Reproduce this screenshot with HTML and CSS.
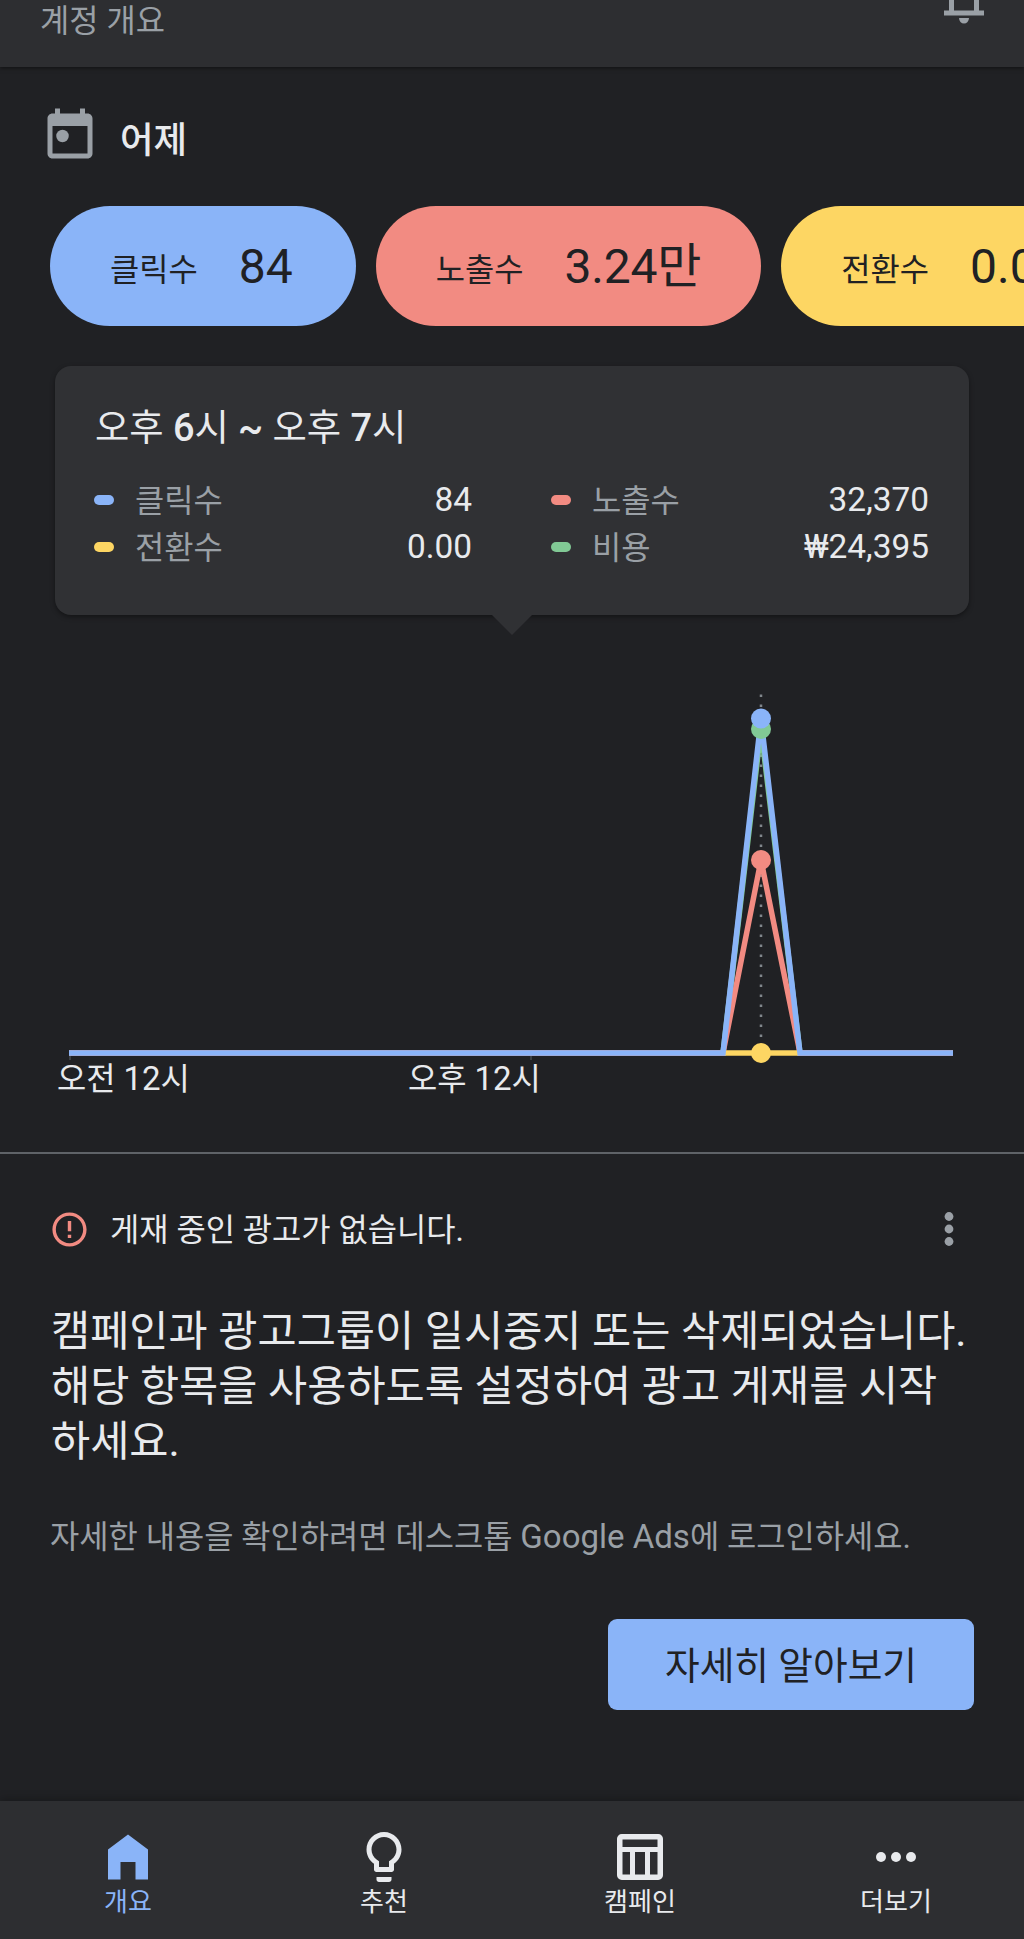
FILE: index.html
```html
<!DOCTYPE html>
<html lang="ko">
<head>
  <meta charset="UTF-8">
  <meta name="viewport" content="width=device-width, initial-scale=1.0">
  <title>계정 개요</title>
  <link rel="stylesheet" href="styles.css">
</head>
<body>
  <header class="topbar">
    <span class="topbar-title">계정 개요</span>
    <svg class="icon bell" viewBox="0 0 24 24">
      <path fill-rule="evenodd" d="M4 19v-2h2v-7c0-2.77 1.8-5 4.5-5.7V4a1.5 1.5 0 0 1 3 0v.3C16.2 5 18 7.23 18 10v7h2v2H4zM8 17h8v-7c0-2.2-1.8-4-4-4s-4 1.8-4 4v7z"/>
      <path d="M10 20h4a2 2.2 0 0 1-4 0z"/>
    </svg>
  </header>

  <main>
    <div class="date">
      <svg class="icon" viewBox="0 0 24 24">
        <path d="M19 3h-1V1h-2v2H8V1H6v2H5c-1.11 0-2 .9-2 2v14c0 1.1.89 2 2 2h14c1.1 0 2-.9 2-2V5c0-1.1-.9-2-2-2zm0 16H5V8h14v11z"/>
        <circle cx="9" cy="12" r="2.5"/>
      </svg>
      <h1>어제</h1>
    </div>

    <div class="chips">
      <div class="chip clicks blue"><span>클릭수</span><b>84</b></div>
      <div class="chip views red"><span>노출수</span><b>3.24만</b></div>
      <div class="chip yellow"><span>전환수</span><b>0.00</b></div>
    </div>

    <section class="tooltip">
      <h2>오후 <b>6</b>시 <b>~</b> 오후 <b>7</b>시</h2>
      <div class="legend">
        <div class="item"><i class="pill blue"></i><span>클릭수</span><b>84</b></div>
        <div class="item"><i class="pill red"></i><span>노출수</span><b>32,370</b></div>
        <div class="item"><i class="pill yellow"></i><span>전환수</span><b>0.00</b></div>
        <div class="item"><i class="pill green"></i><span>비용</span><b>₩24,395</b></div>
      </div>
    </section>

    <section class="chart">
      <svg width="1024" height="400" viewBox="0 0 1024 400">
        <path class="tick" d="M70 390v10M531 390v10"/>
        <path class="guide" d="M761 34.5V390"/>
        <path class="line green-line" d="M69 393H723L761 69L800 393H953"/>
        <path class="line red-line" d="M69 393H723L761 200L800 393H953"/>
        <path class="line yellow-line" d="M725 393H798"/>
        <path class="line blue-line" d="M69 393H723L761 59L800 393H953"/>
        <circle class="green-dot" cx="761" cy="69" r="10"/>
        <circle class="blue-dot" cx="761" cy="58.5" r="10"/>
        <circle class="red-dot" cx="761" cy="200" r="10"/>
        <circle class="yellow-dot" cx="761" cy="393" r="10"/>
      </svg>
      <div class="axis">
        <span>오전 <b>12</b>시</span>
        <span>오후 <b>12</b>시</span>
      </div>
    </section>

    <section class="notice">
      <div class="notice-head">
        <svg class="alert" viewBox="0 0 24 24">
          <path d="M11 15h2v2h-2zm0-8h2v6h-2zm1-5C6.47 2 2 6.48 2 12s4.47 10 10 10 10-4.48 10-10S17.52 2 12 2zm0 18c-4.42 0-8-3.58-8-8s3.58-8 8-8 8 3.58 8 8-3.58 8-8 8z"/>
        </svg>
        <span>게재 중인 광고가 없습니다.</span>
        <svg class="more" viewBox="0 0 24 40">
          <circle cx="12" cy="7.5" r="4.4"/>
          <circle cx="12" cy="20" r="4.4"/>
          <circle cx="12" cy="32.5" r="4.4"/>
        </svg>
      </div>
      <p class="headline">캠페인과 광고그룹이 일시중지 또는 삭제되었습니다.<br>해당 항목을 사용하도록 설정하여 광고 게재를 시작<br>하세요.</p>
      <p class="detail">자세한 내용을 확인하려면 데스크톱 <b>Google Ads</b>에 로그인하세요.</p>
      <button type="button">자세히 알아보기</button>
    </section>
  </main>

  <nav>
    <a class="active">
      <svg class="icon" viewBox="0 0 24 24"><path d="M4 21V9l8-6 8 6v12h-5v-7H9v7z"/></svg>
      <span>개요</span>
    </a>
    <a>
      <svg class="icon" viewBox="0 0 24 24"><path d="M9 21c0 .55.45 1 1 1h4c.55 0 1-.45 1-1v-1H9v1zm3-19C8.14 2 5 5.14 5 9c0 2.38 1.19 4.47 3 5.74V17c0 .55.45 1 1 1h6c.55 0 1-.45 1-1v-2.26c1.81-1.27 3-3.36 3-5.74 0-3.86-3.14-7-7-7zm2.85 11.1l-.85.6V16h-4v-2.3l-.85-.6C7.8 12.16 7 10.63 7 9c0-2.76 2.24-5 5-5s5 2.24 5 5c0 1.63-.8 3.16-2.15 4.1z"/></svg>
      <span>추천</span>
    </a>
    <a>
      <svg class="icon" viewBox="0 0 24 24"><path fill-rule="evenodd" d="M4.7 2.8h14.6a1.9 1.9 0 0 1 1.9 1.9v14.6a1.9 1.9 0 0 1-1.9 1.9H4.7a1.9 1.9 0 0 1-1.9-1.9V4.7a1.9 1.9 0 0 1 1.9-1.9zM5 5v3h14V5zM5 10v9h3v-9zM10 10v9h4v-9zM16 10v9h3v-9z"/></svg>
      <span>캠페인</span>
    </a>
    <a>
      <svg class="icon" viewBox="0 0 24 24"><circle cx="6" cy="12" r="2"/><circle cx="12" cy="12" r="2"/><circle cx="18" cy="12" r="2"/></svg>
      <span>더보기</span>
    </a>
  </nav>
</body>
</html>
```
FILE: styles.css
```css
* {
  box-sizing: border-box;
}
body {
  margin: 0;
  height: 1939px;
  display: flex;
  flex-direction: column;
  overflow: hidden;
  background: #202124;
  color: #e8eaed;
  font-family: Roboto, "Noto Sans CJK KR", sans-serif;
  font-size: 31.8px;
}
h1, h2, p {
  margin: 0;
  font-weight: 400;
}
b {
  font-weight: 400;
}
svg {
  display: block;
  flex: none;
}
.icon {
  width: 60px;
  height: 60px;
  fill: currentColor;
}

/* top bar, scrolled partly out of view */
.topbar {
  height: 67px;
  flex: none;
  display: flex;
  justify-content: space-between;
  padding: 0 30px 0 40px;
  background: #2d2e31;
  color: #9aa0a6;
  box-shadow: 0 1px 4px rgba(0, 0, 0, 0.5);
}
.topbar-title {
  line-height: 43px;
}
.bell {
  margin-top: -32.5px;
}

main {
  flex: 1;
}
.date {
  display: flex;
  align-items: flex-start;
  gap: 20px;
  height: 99px;
  padding: 39px 0 0 40px;
  color: #9aa0a6;
}
.date h1 {
  color: #e8eaed;
  font-size: 36.5px;
  font-weight: 500;
  line-height: 70px;
}

.chips {
  display: flex;
  gap: 20px;
  padding-left: 50px;
  margin-top: 40px;
  overflow: hidden;
}
.chip {
  flex: none;
  display: flex;
  align-items: center;
  gap: 41px;
  height: 120px;
  padding: 0 60px;
  border-radius: 60px;
  line-height: 60px;
  color: #202124;
}
.chip span {
  padding-top: 8px;
}
.chip b {
  padding-top: 2px;
  font-size: 48px;
}
.chip.clicks {
  padding-right: 63px;
}
.chip.views b {
  letter-spacing: -0.2px;
}
.blue { background: #8ab4f8; }
.red { background: #f28b82; }
.yellow { background: #fdd663; }
.green { background: #81c995; }

.tooltip {
  position: relative;
  height: 249px;
  margin: 40px 55px 0;
  padding: 38px 40px 0 39px;
  border-radius: 16px;
  background: #303134;
  box-shadow: 0 2px 5px rgba(0, 0, 0, 0.4);
}
.tooltip::after {
  content: "";
  position: absolute;
  left: 437px;
  top: 100%;
  border: 20px solid transparent;
  border-top-color: #303134;
  border-bottom: 0;
}
.tooltip h2 {
  padding-left: 1px;
  font-size: 37.3px;
  line-height: 48px;
}
.tooltip h2 b {
  font-size: 38px;
  font-weight: 500;
}
.legend {
  display: grid;
  grid-template-columns: 1fr 1fr;
  column-gap: 79px;
  margin-top: 24px;
}
.item {
  display: flex;
  align-items: center;
  height: 47px;
  line-height: 47px;
}
.pill {
  width: 20px;
  height: 10px;
  margin-right: 21px;
  border-radius: 5px;
}
.item span {
  flex: 1;
  padding-top: 3px;
  color: #9aa0a6;
}
.item b {
  font-size: 33.4px;
}

.chart {
  height: 494px;
  margin-top: 45px;
  border-bottom: 2px solid #5f6368;
}
.chart svg {
  overflow: visible;
}
.line {
  fill: none;
  stroke-width: 5.5;
}
.blue-line { stroke: #8ab4f8; }
.red-line { stroke: #f28b82; }
.yellow-line { stroke: #fdd663; }
.green-line { stroke: #81c995; }
.blue-dot { fill: #8ab4f8; }
.red-dot { fill: #f28b82; }
.yellow-dot { fill: #fdd663; }
.green-dot { fill: #81c995; }
.guide {
  stroke: #80868b;
  stroke-width: 2.5;
  stroke-dasharray: 2.5 7.5;
}
.tick {
  stroke: #3c4043;
  stroke-width: 2;
}
.axis {
  display: grid;
  grid-template-columns: 351px auto;
  padding-left: 57px;
  line-height: 38px;
}
.axis b {
  font-size: 33px;
}

.notice {
  padding: 50px 50px 0 49px;
}
.notice-head {
  display: flex;
  align-items: center;
  height: 50px;
}
.notice-head span {
  flex: 1;
  padding: 0 0 4px 20px;
}
.alert {
  width: 41px;
  height: 41px;
  fill: #f28b82;
}
.more {
  width: 24px;
  height: 40px;
  margin-right: 13px;
  fill: #9aa0a6;
}
.headline {
  margin-top: 50px;
  padding-left: 2px;
  font-size: 42.6px;
  line-height: 55px;
  white-space: nowrap;
}
.detail {
  margin-top: 43px;
  padding-left: 1px;
  line-height: 50px;
  color: #9aa0a6;
  white-space: nowrap;
}
.detail b {
  font-size: 33px;
}
button {
  display: block;
  width: 366px;
  height: 91px;
  margin: 57px 0 0 auto;
  padding: 0 0 4px;
  border: 0;
  border-radius: 9px;
  background: #8ab4f8;
  color: #202124;
  font: 37.7px Roboto, "Noto Sans CJK KR", sans-serif;
}

nav {
  flex: none;
  display: grid;
  grid-template-columns: repeat(4, 1fr);
  height: 138px;
  padding-top: 26px;
  background: #2d2e31;
  box-shadow: 0 -2px 8px rgba(0, 0, 0, 0.25);
}
nav a {
  display: flex;
  flex-direction: column;
  align-items: center;
  font-size: 26px;
  line-height: 30px;
}
nav .active {
  color: #8ab4f8;
}
```
